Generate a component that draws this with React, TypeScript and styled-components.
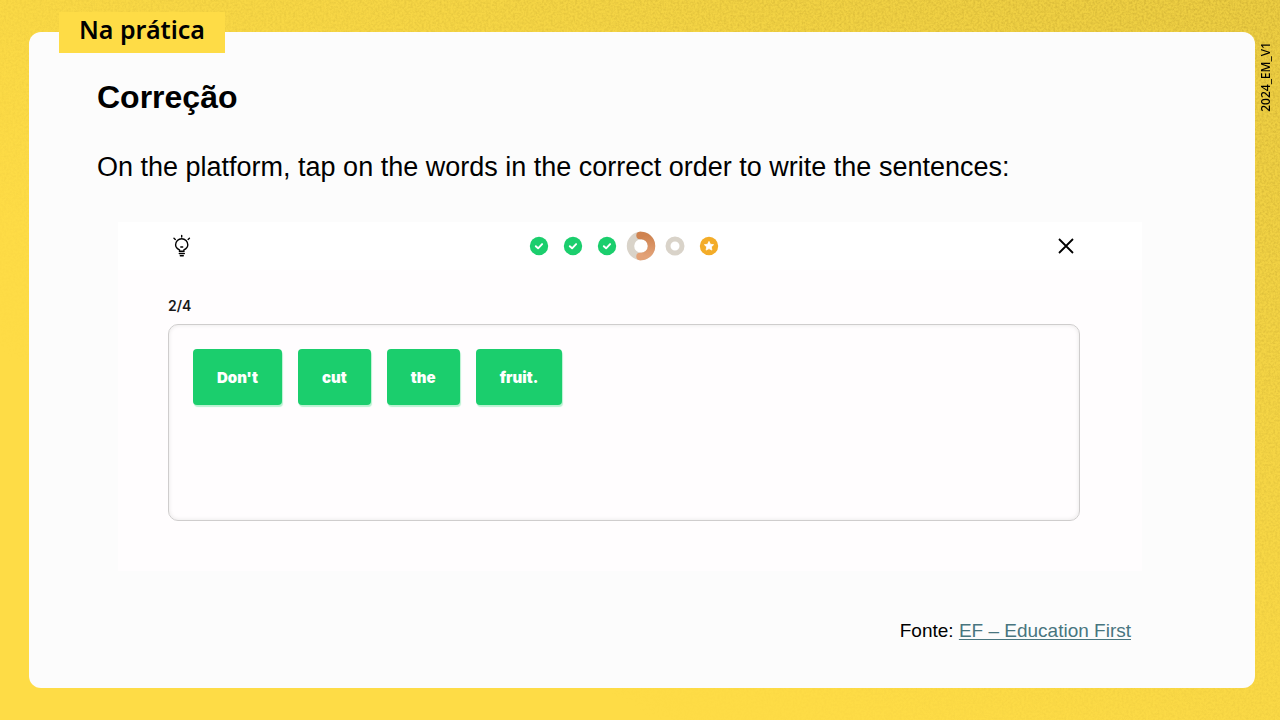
import React from "react";
import styled, { createGlobalStyle } from "styled-components";

const GlobalStyle = createGlobalStyle`
  *, *::before, *::after { box-sizing: border-box; }
  body { margin: 0; background: #fedc46; }
`;

const sans = `"Liberation Sans", Arial, sans-serif`;

const Slide = styled.div`
  position: relative;
  display: grid;
  grid-template-columns: minmax(0, 1fr) 25px;
  min-height: 100vh;
  padding: 32px 0 32px 29px;
  background: linear-gradient(to top right, #fedc46 35%, #f5d545 70%, #eccd42 100%);
  color: #000;
  font-family: ${sans};
`;

const Grain = styled.svg`
  position: absolute;
  inset: 0;
  width: 100%;
  height: 100%;
  pointer-events: none;
`;

const Card = styled.main`
  position: relative;
  display: flex;
  flex-direction: column;
  padding: 45px 113px 45px 68px;
  border-radius: 12px;
  background: #fcfcfc;
`;

const SectionTab = styled.div`
  position: absolute;
  top: -20px;
  left: 30px;
  height: 41px;
  padding: 0 20px;
  background: #fedc46;
  font: 600 25px/34px "Noto Sans", sans-serif;
`;

const Version = styled.aside`
  position: relative;
  justify-self: start;
  align-self: start;
  margin-top: 10px;
  writing-mode: vertical-rl;
  transform: rotate(180deg);
  font: 500 12px/22px "Noto Sans", sans-serif;
`;

const Title = styled.h1`
  margin: 0;
  font-size: 32px;
  line-height: 40px;
`;

const Instruction = styled.p`
  margin: 32px 0 0;
  font-size: 27px;
  line-height: 36px;
`;

const Exercise = styled.section`
  margin: 37px 0 0 21px;
  padding: 0 62px 50px 50px;
  background: #fffdfe;
`;

const Toolbar = styled.header`
  display: grid;
  grid-template-columns: 1fr auto 1fr;
  align-items: center;
  height: 48px;
  margin: 0 -62px 0 -50px;
  padding: 0 62px 0 50px;
  background: #fff;
`;

const IconButton = styled.button<{ $end?: boolean }>`
  display: flex;
  justify-self: ${(p) => (p.$end ? "end" : "start")};
  padding: 0;
  border: 0;
  background: none;
  color: #000;
  cursor: pointer;
`;

const Steps = styled.ol`
  display: flex;
  align-items: center;
  gap: 14px;
  margin: 0;
  padding: 0;
  list-style: none;
`;

const Step = styled.li<{ $current?: boolean }>`
  display: flex;
  margin: 0 ${(p) => (p.$current ? "-5px" : "0")};
`;

const Counter = styled.p`
  margin: 26px 0 9px;
  font: 600 14px/19px Inter, sans-serif;
  color: #191919;
`;

const AnswerBox = styled.div`
  display: flex;
  flex-wrap: wrap;
  align-content: flex-start;
  gap: 16px;
  min-height: 197px;
  padding: 24px;
  border: 1px solid #cfcdcd;
  border-radius: 10px;
  box-shadow: inset 0 0 4px #e6e5e5;
`;

const Word = styled.button`
  height: 56px;
  padding: 2px 24px 0;
  border: 0;
  border-radius: 4px;
  background: #1bce6d;
  box-shadow: 1px 2px 1px #b9f2d1;
  color: #fff;
  font: 900 15px/24px Inter, sans-serif;
  cursor: pointer;
`;

const Source = styled.p`
  margin: auto 11px 0 0;
  padding-top: 46px;
  text-align: right;
  font-size: 19px;
  line-height: 24px;
`;

const SourceLink = styled.a`
  color: #48757f;
  text-decoration: underline;
  text-underline-offset: 2px;
`;

const Bulb = () => (
  <svg width="28" height="28" viewBox="0 0 28 28" fill="none" stroke="currentColor" strokeWidth="1.4" strokeLinecap="round">
    <path d="M11.500 19.200v-1.300c-2.300-1-3.900-2.800-3.900-5.100a6.100 6.100 0 0 1 12.200 0c0 2.300-1.600 4.100-3.900 5.100v1.300z" />
    <path d="M11.300 21.500h5M12.300 23.700h3M12.800 15h1.900M13.700 3.400v1.700M6 6.200l1.300 1.200M21.400 6.200l-1.300 1.200" />
  </svg>
);

const Close = () => (
  <svg width="28" height="28" viewBox="0 0 28 28" fill="none" stroke="currentColor" strokeWidth="1.8">
    <path d="M7 7l14 14M21 7L7 21" />
  </svg>
);

const DoneIcon = () => (
  <svg width="20" height="20" viewBox="0 0 20 20" fill="none" role="img" aria-label="Done">
    <circle cx="10" cy="10" r="9.200" fill="#1bce6d" />
    <path d="M6.800 10.200l2.300 2.100 4-4.200" stroke="#fff" strokeWidth="1.900" strokeLinecap="round" strokeLinejoin="round" />
  </svg>
);

const CurrentIcon = () => (
  <svg width="30" height="30" viewBox="0 0 30 30" fill="none" role="img" aria-label="In progress">
    <defs>
      <linearGradient id="progress" x1="0" y1="0" x2="0" y2="1">
        <stop offset="0" stopColor="#cf8350" />
        <stop offset="1" stopColor="#e3a278" />
      </linearGradient>
    </defs>
    <circle cx="15" cy="15" r="10.500" stroke="#d9d3c9" strokeWidth="7.400" />
    <path d="M14 4.550A10.500 10.500 0 1 1 14 25.450" stroke="url(#progress)" strokeWidth="7.400" />
    <circle cx="14" cy="4.550" r="3.700" fill="#cf8350" />
    <circle cx="14" cy="25.450" r="3.700" fill="#e3a278" />
  </svg>
);

const PendingIcon = () => (
  <svg width="20" height="20" viewBox="0 0 20 20" fill="none" role="img" aria-label="Pending">
    <circle cx="10" cy="10" r="7" stroke="#d9d3c9" strokeWidth="5" />
  </svg>
);

const StarIcon = () => (
  <svg width="20" height="20" viewBox="0 0 20 20" role="img" aria-label="Final step">
    <circle cx="10" cy="10" r="9.200" fill="#f3ac28" />
    <path
      d="M10 5.400l1.400 2.900 3.200.4-2.300 2.200.6 3.200L10 12.600l-2.900 1.500.6-3.200-2.300-2.200 3.200-.4z"
      fill="#fff" stroke="#fff" strokeWidth=".8" strokeLinejoin="round"
    />
  </svg>
);

const words = ["Don't", "cut", "the", "fruit."];

export default function App() {
  return (
    <Slide>
      <GlobalStyle />
      <Grain aria-hidden="true">
        <defs>
          <filter id="grain" x="0" y="0" width="100%" height="100%" colorInterpolationFilters="sRGB">
            <feTurbulence type="fractalNoise" baseFrequency="0.45" numOctaves="2" seed="4" />
            <feColorMatrix values="0 0 0 0 .6  0 0 0 0 .48  0 0 0 0 .1  .6 0 0 0 -.22" />
          </filter>
          <linearGradient id="fade" x1="0" y1="1" x2="1" y2="0">
            <stop offset=".25" stopColor="#000" />
            <stop offset="1" stopColor="#fff" />
          </linearGradient>
          <mask id="grainMask">
            <rect width="100%" height="100%" fill="url(#fade)" />
          </mask>
        </defs>
        <g mask="url(#grainMask)">
          <rect width="100%" height="100%" filter="url(#grain)" />
        </g>
      </Grain>
      <Card>
        <SectionTab>Na prática</SectionTab>
        <Title>Correção</Title>
        <Instruction>On the platform, tap on the words in the correct order to write the sentences:</Instruction>
        <Exercise>
          <Toolbar>
            <IconButton aria-label="Hint"><Bulb /></IconButton>
            <Steps>
              <Step><DoneIcon /></Step>
              <Step><DoneIcon /></Step>
              <Step><DoneIcon /></Step>
              <Step $current><CurrentIcon /></Step>
              <Step><PendingIcon /></Step>
              <Step><StarIcon /></Step>
            </Steps>
            <IconButton $end aria-label="Close"><Close /></IconButton>
          </Toolbar>
          <Counter>2/4</Counter>
          <AnswerBox>
            {words.map((word) => (
              <Word key={word}>{word}</Word>
            ))}
          </AnswerBox>
        </Exercise>
        <Source>
          Fonte: <SourceLink href="#">EF – Education First</SourceLink>
        </Source>
      </Card>
      <Version>2024_EM_V1</Version>
    </Slide>
  );
}
